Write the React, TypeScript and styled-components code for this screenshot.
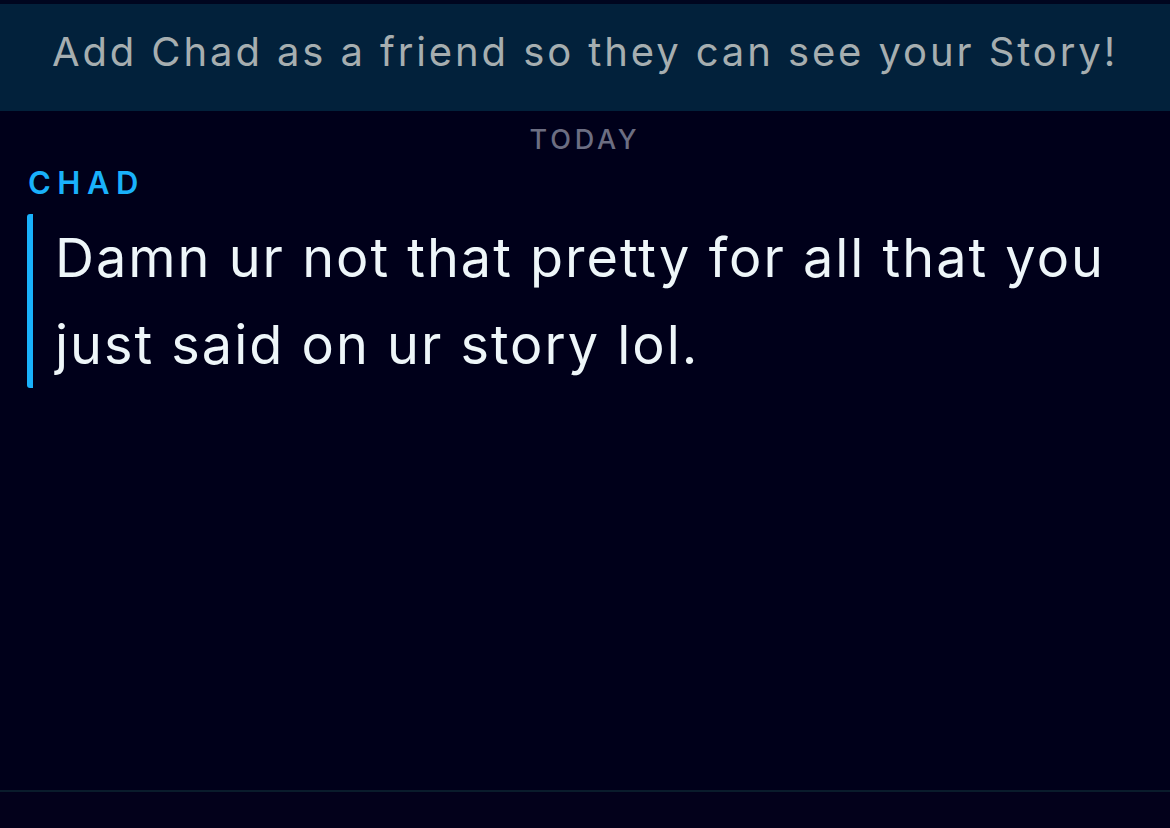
import styled, { createGlobalStyle } from "styled-components";

const GlobalStyle = createGlobalStyle`
  html, body {
    margin: 0;
    padding: 0;
    background-color: #00001a;
  }
`;

const App = (): JSX.Element => {
  return (
    <Screen>
      <GlobalStyle />
      <TopEdge />
      <Banner>Add Chad as a friend so they can see your Story!</Banner>
      <Chat>
        <DayLabel>Today</DayLabel>
        <SenderName>Chad</SenderName>
        <MessageBlock>
          <p>Damn ur not that pretty for all that you just said on ur story lol.</p>
        </MessageBlock>
      </Chat>
      <Footer />
    </Screen>
  );
};

const Screen = styled.div`
  width: 1170px;
  height: 828px;
  display: flex;
  flex-direction: column;
  background-color: #00001a;
  font-family: Inter, "Open Sans", sans-serif;
  overflow: hidden;
`;

const TopEdge = styled.div`
  height: 4px;
  background-color: #00061f;
`;

const Banner = styled.div`
  height: 107px;
  padding-top: 24px;
  box-sizing: border-box;
  text-align: center;
  background-color: #02213b;
  color: #a6aeb0;
  font-size: 40px;
  line-height: 48px;
  font-weight: 400;
  letter-spacing: 2.9px;
  white-space: nowrap;
`;

const Chat = styled.div`
  flex: 1;
  display: flex;
  flex-direction: column;
  padding-top: 14px;
`;

const DayLabel = styled.div`
  text-align: center;
  color: #6c6e82;
  font-size: 27px;
  font-weight: 500;
  letter-spacing: 3.8px;
  text-transform: uppercase;
  line-height: 30px;
`;

const SenderName = styled.div`
  margin: 11px 0 0 28px;
  color: #19b1fb;
  font-size: 31px;
  font-weight: 600;
  letter-spacing: 6.5px;
  text-transform: uppercase;
  line-height: 34px;
`;

const MessageBlock = styled.div`
  margin: 14px 0 0 27px;
  width: 1120px;
  border-left: 6px solid #19b1fb;
  border-radius: 3px;
  padding-left: 22px;
  box-sizing: border-box;

  p {
    margin: 0;
    color: #eef6f9;
    font-size: 54px;
    font-weight: 400;
    letter-spacing: 2px;
    line-height: 87px;
  }
`;

const Footer = styled.div`
  height: 36px;
  border-top: 2px solid #0a1c2c;
  background-color: #03011b;
`;

export default App;
